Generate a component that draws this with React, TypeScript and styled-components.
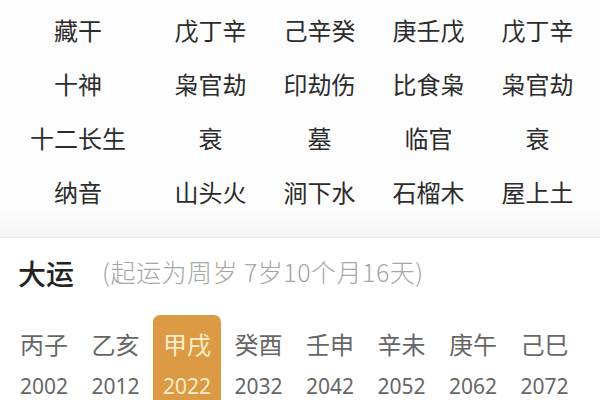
import React from "react";
import styled, { createGlobalStyle } from "styled-components";

const Global = createGlobalStyle`
  html, body { margin: 0; padding: 0; background: #ffffff; }
  body { width: 600px; height: 400px; overflow: hidden; font-family: "Noto Sans CJK SC", "Noto Sans", sans-serif; }
`;

const Page = styled.div`
  width: 600px;
  height: 400px;
  display: flex;
  flex-direction: column;
  overflow: hidden;
`;

const TablePanel = styled.div`
  background: linear-gradient(#fdfdfd 0%, #fdfdfd 88%, #f6f6f6 100%);
  border-bottom: 1px solid #e9e9e9;
  padding-top: 2px;
  height: 241px;
  box-sizing: border-box;
`;

const Grid = styled.div`
  display: grid;
  grid-template-columns: 156px repeat(4, 109px);
  grid-auto-rows: 54px;
`;

const Cell = styled.div`
  display: flex;
  align-items: center;
  justify-content: center;
  font-size: 24px;
  color: #2c2c2c;
  white-space: nowrap;
`;

const Section = styled.div`
  flex: 1;
  display: flex;
  flex-direction: column;
  background: #ffffff;
`;

const TitleRow = styled.div`
  display: flex;
  align-items: flex-start;
  padding: 15px 0 0 18px;
  height: 44px;
  box-sizing: border-box;
`;

const Title = styled.span`
  font-size: 28px;
  line-height: 40px;
  font-weight: 500;
  color: #222222;
  margin-right: 28px;
`;

const Sub = styled.span`
  font-size: 25px;
  line-height: 36px;
  font-weight: 300;
  color: #a6a6a6;
  white-space: nowrap;
  letter-spacing: 0.5px;
`;

const Yun = styled.div`
  display: flex;
  gap: 3.5px;
  padding: 0 0 0 10px;
  margin-top: 33px;
  flex: 1;
`;

const YunItem = styled.div<{ $active?: boolean }>`
  width: 68px;
  display: flex;
  flex-direction: column;
  align-items: center;
  padding-top: 12px;
  border-radius: 7px 7px 0 0;
  background: ${(p) => (p.$active ? "#dc9a44" : "transparent")};
  color: ${(p) => (p.$active ? "#fdecc9" : "#666666")};
`;

const Gz = styled.div`
  font-size: 24px;
  line-height: 34px;
`;

const Year = styled.div`
  font-size: 21px;
  line-height: 28px;
  margin-top: 11px;
  font-family: "Noto Sans", "Noto Sans CJK SC", sans-serif;
`;

const rows: string[][] = [
  ["藏干", "戊丁辛", "己辛癸", "庚壬戊", "戊丁辛"],
  ["十神", "枭官劫", "印劫伤", "比食枭", "枭官劫"],
  ["十二长生", "衰", "墓", "临官", "衰"],
  ["纳音", "山头火", "涧下水", "石榴木", "屋上土"],
];

const yun = [
  ["丙子", "2002"],
  ["乙亥", "2012"],
  ["甲戌", "2022"],
  ["癸酉", "2032"],
  ["壬申", "2042"],
  ["辛未", "2052"],
  ["庚午", "2062"],
  ["己巳", "2072"],
];

export default function App() {
  return (
    <Page>
      <Global />
      <TablePanel>
        <Grid>
          {rows.map((r, i) =>
            r.map((c, j) => <Cell key={`${i}-${j}`}>{c}</Cell>)
          )}
        </Grid>
      </TablePanel>
      <Section>
        <TitleRow>
          <Title>大运</Title>
          <Sub>(起运为周岁 7岁10个月16天)</Sub>
        </TitleRow>
        <Yun>
          {yun.map(([g, y], i) => (
            <YunItem key={g} $active={i === 2}>
              <Gz>{g}</Gz>
              <Year>{y}</Year>
            </YunItem>
          ))}
        </Yun>
      </Section>
    </Page>
  );
}
